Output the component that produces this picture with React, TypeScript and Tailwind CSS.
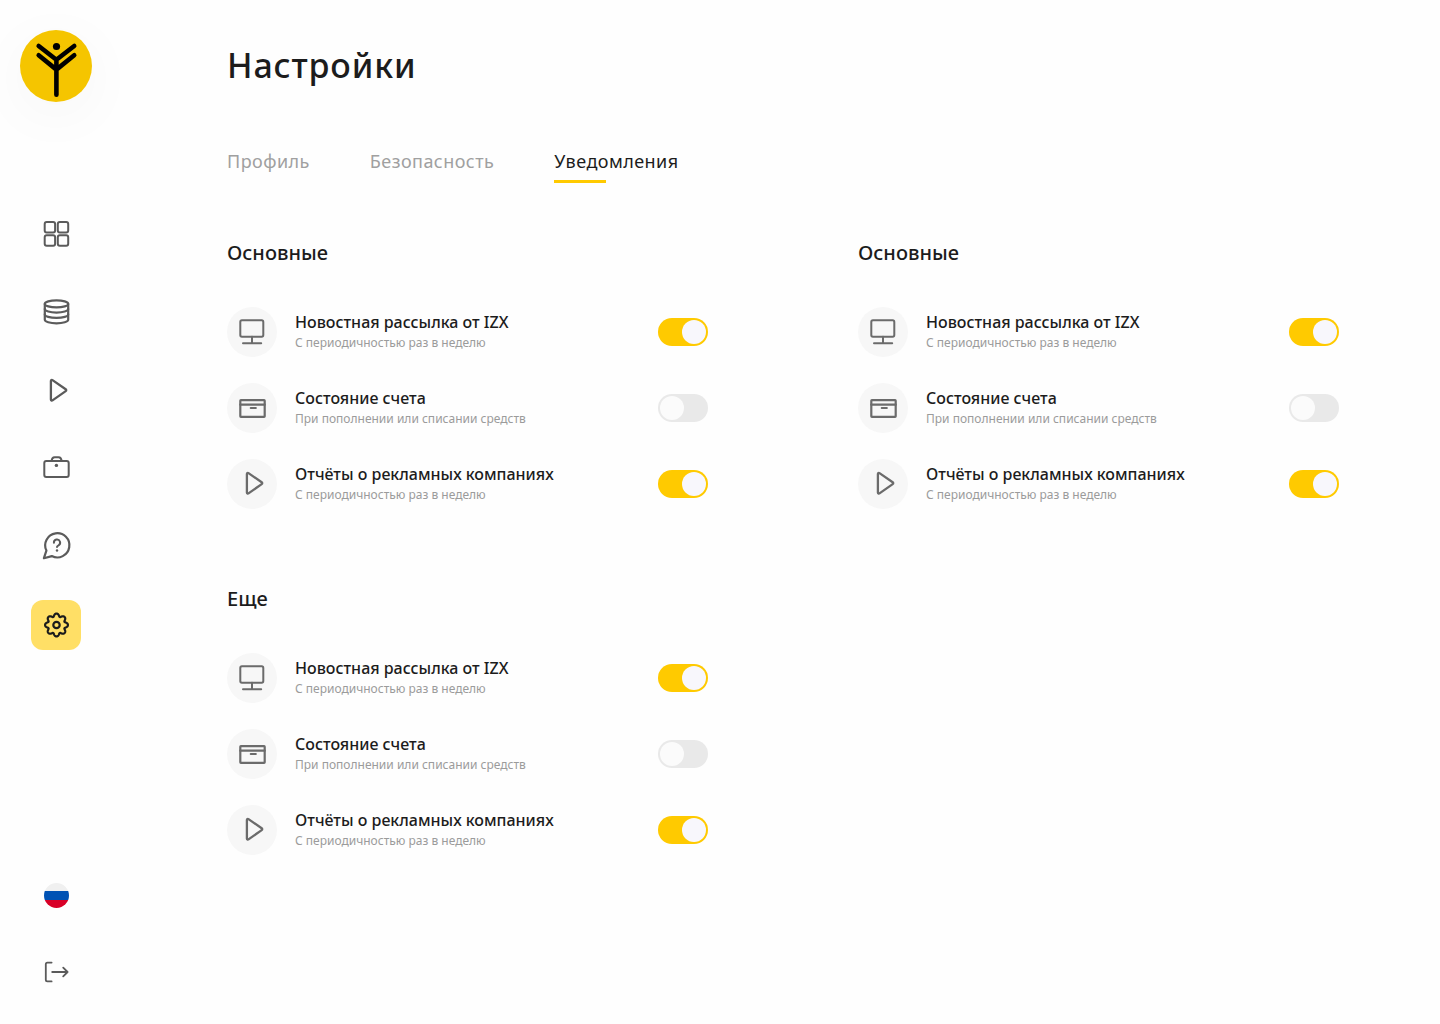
import { useId, useState } from "react";
import type { ReactNode } from "react";

type IconProps = { children: ReactNode };

function Icon({ children }: IconProps) {
  return (
    <svg
      viewBox="0 0 32 32"
      className="size-8 shrink-0"
      fill="none"
      stroke="currentColor"
      strokeWidth="2"
      strokeLinecap="round"
      strokeLinejoin="round"
      aria-hidden="true"
    >
      {children}
    </svg>
  );
}

const GridIcon = () => (
  <Icon>
    <rect x="4.7" y="3" width="10.4" height="10.4" rx="2" />
    <rect x="17.8" y="3" width="10.4" height="10.4" rx="2" />
    <rect x="4.7" y="16.3" width="10.4" height="10.4" rx="2" />
    <rect x="17.8" y="16.3" width="10.4" height="10.4" rx="2" />
  </Icon>
);

const DatabaseIcon = () => (
  <Icon>
    <g strokeWidth="2.2">
      <ellipse cx="16.5" cy="6.9" rx="11.7" ry="3.5" />
      <path d="M4.8 6.9v15.9c0 1.9 5.2 3.5 11.7 3.5s11.7-1.6 11.7-3.5V6.9" />
      <path d="M4.8 12.1c0 1.9 5.2 3.5 11.7 3.5s11.7-1.6 11.7-3.5" />
      <path d="M4.8 17.4c0 1.9 5.2 3.5 11.7 3.5s11.7-1.6 11.7-3.5" />
    </g>
  </Icon>
);

const PlayIcon = () => (
  <Icon>
    <path
      strokeWidth="2.3"
      d="M10.9 6c0-1 .9-1.4 1.6-.9l13.2 9.2c.7.5.7 1.3 0 1.8l-13.2 9.3c-.7.5-1.6 0-1.6-.9z"
    />
  </Icon>
);

const BriefcaseIcon = () => (
  <Icon>
    <rect x="4.3" y="8" width="24.4" height="16" rx="2" />
    <path d="M11.6 8c.2-2.6 1-3.8 3-3.8h4c2 0 2.8 1.2 3 3.8" />
    <circle cx="16.4" cy="12.4" r="1.7" fill="currentColor" stroke="none" />
  </Icon>
);

const HelpIcon = () => (
  <Icon>
    <path
      strokeWidth="2.2"
      d="M3.9 27.2 6.4 19.6A12.1 12.1 0 1 1 11.8 25.1Z"
    />
    <path d="M13.9 11.7a3.1 3.1 0 1 1 4.6 2.6c-1 .5-1.5 1-1.5 1.8" />
    <circle cx="17" cy="19.5" r="1.2" fill="currentColor" stroke="none" />
  </Icon>
);

const gearOutline =
  Array.from({ length: 240 }, (_, i) => {
    const angle = (i / 240) * Math.PI * 2;
    const radius =
      10.2 + 1.4 * Math.cos(8 * angle) - 0.2 * Math.cos(16 * angle);
    const x = 16.5 + radius * Math.sin(angle);
    const y = 16 - radius * Math.cos(angle);
    return `${i === 0 ? "M" : "L"}${x.toFixed(2)} ${y.toFixed(2)}`;
  }).join("") + "Z";

const GearIcon = () => (
  <Icon>
    <path d={gearOutline} strokeWidth="2.2" />
    <circle cx="16.5" cy="16" r="3.2" strokeWidth="2.2" />
  </Icon>
);

const LogoutIcon = () => (
  <Icon>
    <path strokeWidth="1.8" d="M11.6 6.6H7.4c-1 0-1.6.6-1.6 1.6v15.6c0 1 .6 1.6 1.6 1.6h4.2" />
    <path strokeWidth="1.8" d="M12.2 16h15.4M23.2 11.6 27.6 16l-4.4 4.4" />
  </Icon>
);

const MonitorIcon = () => (
  <Icon>
    <rect x="4.3" y="4.3" width="23" height="16.4" rx="1.6" />
    <path d="M16 20.7v6.5M7 27.3h18.2" />
  </Icon>
);

const BoxIcon = () => (
  <Icon>
    <rect x="4.3" y="8.2" width="24.4" height="16.6" rx="0.6" strokeWidth="2.2" />
    <path strokeWidth="2.2" d="M4.3 12.7h24.4M14.8 16h5" />
  </Icon>
);

const Logo = () => (
  <svg viewBox="0 0 72 72" className="size-[72px]" aria-hidden="true">
    <circle cx="36" cy="36" r="36" fill="#f5c500" />
    <circle cx="36.5" cy="16.5" r="3.6" />
    <path
      d="M18.7 16 36.4 29.8 54.2 16M18.7 25.3 36.4 39.6 54.2 25.3M36.4 30v34.7"
      fill="none"
      stroke="#000"
      strokeWidth="4.6"
      strokeLinecap="round"
      strokeLinejoin="round"
    />
  </svg>
);

const navItems = [
  { label: "Панель", icon: <GridIcon /> },
  { label: "Финансы", icon: <DatabaseIcon /> },
  { label: "Кампании", icon: <PlayIcon /> },
  { label: "Портфель", icon: <BriefcaseIcon /> },
  { label: "Помощь", icon: <HelpIcon /> },
  { label: "Настройки", icon: <GearIcon />, active: true },
];

function Sidebar() {
  return (
    <aside className="flex w-28 shrink-0 flex-col items-center pt-[30px] pb-[27px] text-[#5b5b5b]">
      <a
        href="#"
        aria-label="IZX"
        className="rounded-full shadow-[0_12px_60px_rgba(0,0,0,0.04)]"
      >
        <Logo />
      </a>
      <nav className="mt-[108px] flex flex-col gap-7">
        {navItems.map((item) => (
          <a
            key={item.label}
            href="#"
            aria-label={item.label}
            aria-current={item.active ? "page" : undefined}
            className={
              item.active
                ? "flex size-[50px] items-center justify-center rounded-xl bg-[#ffdf66] text-[#1c1c1c]"
                : "flex size-[50px] items-center justify-center rounded-xl"
            }
          >
            {item.icon}
          </a>
        ))}
      </nav>
      <button
        type="button"
        aria-label="Русский язык"
        className="mt-auto flex size-[26px] flex-col"
      >
        <svg viewBox="0 0 26 26" className="size-[26px]" aria-hidden="true">
          <clipPath id="flag-circle">
            <circle cx="13.5" cy="12.5" r="12.5" />
          </clipPath>
          <g clipPath="url(#flag-circle)">
            <path fill="#f0f0f0" d="M0 0h26v9H0z" />
            <path fill="#0052b4" d="M0 8h26v9H0z" />
            <path fill="#d80027" d="M0 17h26v9H0z" />
          </g>
        </svg>
      </button>
      <button
        type="button"
        aria-label="Выйти"
        className="mt-[38px] flex size-[50px] items-center justify-center"
      >
        <LogoutIcon />
      </button>
    </aside>
  );
}

type Setting = {
  title: string;
  note: string;
  icon: ReactNode;
  enabled: boolean;
};

const settings: Setting[] = [
  {
    title: "Новостная рассылка от IZX",
    note: "С периодичностью раз в неделю",
    icon: <MonitorIcon />,
    enabled: true,
  },
  {
    title: "Состояние счета",
    note: "При пополнении или списании средств",
    icon: <BoxIcon />,
    enabled: false,
  },
  {
    title: "Отчёты о рекламных компаниях",
    note: "С периодичностью раз в неделю",
    icon: <PlayIcon />,
    enabled: true,
  },
];

function SettingRow({ title, note, icon, enabled }: Setting) {
  const id = useId();
  const [on, setOn] = useState(enabled);
  return (
    <li className="flex items-center">
      <span className="flex size-[50px] shrink-0 items-center justify-center rounded-full bg-[#f7f7f7] text-[#6b6b6b]">
        {icon}
      </span>
      <div className="ml-[18px] flex-1">
        <label htmlFor={id} className="block text-base leading-[22px] font-medium">
          {title}
        </label>
        <p id={`${id}-note`} className="text-xs leading-5 text-[#9b9b9b]">
          {note}
        </p>
      </div>
      <input
        id={id}
        type="checkbox"
        role="switch"
        aria-describedby={`${id}-note`}
        checked={on}
        onChange={(event) => setOn(event.target.checked)}
        className="flex h-7 w-[50px] shrink-0 cursor-pointer appearance-none items-center rounded-full bg-[#e9e9e9] p-0.5 before:size-6 before:rounded-full before:bg-[#fbfbfb] before:content-[''] checked:justify-end checked:bg-[#ffca00] checked:before:bg-[#f8f7fc]"
      />
    </li>
  );
}

function Section({ title }: { title: string }) {
  return (
    <section>
      <h2 className="text-xl leading-7 font-medium">{title}</h2>
      <ul className="mt-10 flex flex-col gap-[26px]">
        {settings.map((setting) => (
          <SettingRow key={setting.title} {...setting} />
        ))}
      </ul>
    </section>
  );
}

const tabs = ["Профиль", "Безопасность", "Уведомления"];

export default function App() {
  const [current, setCurrent] = useState("Уведомления");
  return (
    <div className="flex min-h-screen bg-[#fefefe] font-['Noto_Sans',sans-serif] text-[#1c1c1c]">
      <Sidebar />
      <main className="flex-1 pt-10 pr-[101px] pb-12 pl-[115px]">
        <h1 className="text-[34px] leading-[50px] font-medium tracking-wide">Настройки</h1>
        <div role="tablist" className="mt-[59px] flex gap-[60px]">
          {tabs.map((tab) => (
            <button
              key={tab}
              type="button"
              role="tab"
              aria-selected={tab === current}
              onClick={() => setCurrent(tab)}
              className={
                tab === current
                  ? "flex flex-col gap-[7px] text-lg leading-6 tracking-wide"
                  : "flex flex-col gap-[7px] text-lg leading-6 tracking-wide text-[#a0a0a0]"
              }
            >
              {tab}
              <span
                className={
                  tab === current ? "h-[3px] w-[52px] bg-[#ffca00]" : "h-[3px] w-[52px]"
                }
              />
            </button>
          ))}
        </div>
        <div className="mt-14 grid grid-cols-2 gap-x-[150px] gap-y-[76px]">
          <Section title="Основные" />
          <Section title="Основные" />
          <Section title="Еще" />
        </div>
      </main>
    </div>
  );
}
